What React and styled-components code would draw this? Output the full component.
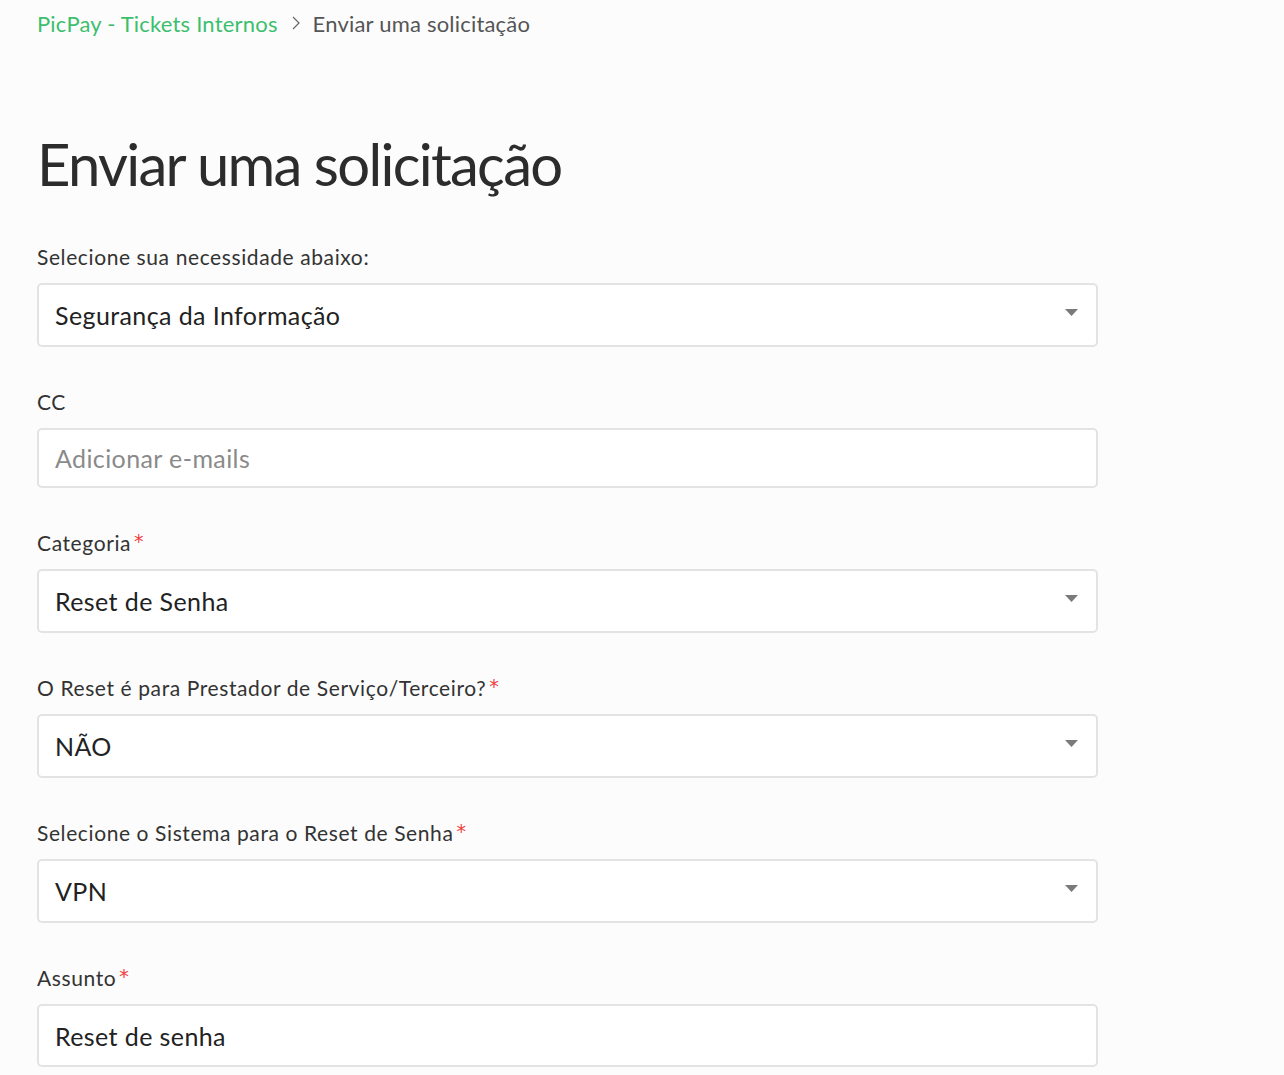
import React from "react";
import styled, { createGlobalStyle } from "styled-components";

const GlobalStyle = createGlobalStyle`
  html, body {
    margin: 0;
    padding: 0;
    background: #fcfcfc;
    font-family: Lato, "Liberation Sans", sans-serif;
    color: #2f2f2f;
  }
`;

const Page = styled.div`
  width: 1061px;
  padding: 7px 0 0 37px;
`;

const Breadcrumbs = styled.nav`
  display: flex;
  align-items: center;
  height: 32px;
  font-size: 22px;
  letter-spacing: 0.2px;
  > a {
    color: #3cbf6d;
    text-decoration: none;
  }
  > span {
    color: #555;
  }
  > svg {
    margin: 0 13px 0 14px;
  }
`;

const Title = styled.h1`
  margin: 90px 0 43px;
  font-size: 58px;
  font-weight: 400;
  letter-spacing: -1.7px;
  line-height: 70px;
  color: #2c2c2c;
`;

const Field = styled.div`
  margin-bottom: 40px;
`;

const Label = styled.label`
  display: block;
  height: 30px;
  line-height: 30px;
  margin-bottom: 11px;
  font-size: 21px;
  letter-spacing: 0.6px;
  color: #333;
`;

const Required = styled.span`
  color: #f0403c;
  margin-left: 3px;
  font-family: "DejaVu Sans", sans-serif;
  font-size: 19px;
  position: relative;
  top: -3px;
`;

const Box = styled.div`
  display: flex;
  align-items: center;
  justify-content: space-between;
  box-sizing: border-box;
  height: ${(p) => p.$h || 64}px;
  padding: 0 18px 0 16px;
  background: #fff;
  border: 2px solid #e3e3e3;
  border-radius: 5px;
  font-size: 25px;
  letter-spacing: 0.4px;
  color: ${(p) => (p.$placeholder ? "#8a8a8a" : "#222")};
  > svg {
    margin-bottom: 6px;
  }
`;

const Caret = () => (
  <svg width="13" height="7" viewBox="0 0 13 7">
    <polygon points="0,0 13,0 6.5,7" fill="#7a7a7a" />
  </svg>
);

const fields = [
  { label: "Selecione sua necessidade abaixo:", value: "Segurança da Informação", select: true },
  { label: "CC", value: "Adicionar e-mails", placeholder: true, h: 60 },
  { label: "Categoria", value: "Reset de Senha", select: true, required: true },
  { label: "O Reset é para Prestador de Serviço/Terceiro?", value: "NÃO", select: true, required: true },
  { label: "Selecione o Sistema para o Reset de Senha", value: "VPN", select: true, required: true },
  { label: "Assunto", value: "Reset de senha", required: true, h: 63 },
];

const App = () => {
  return (
    <>
      <GlobalStyle />
      <Page>
        <Breadcrumbs>
          <a href="#">PicPay - Tickets Internos</a>
          <svg width="8" height="14" viewBox="0 0 8 14">
            <polyline points="1,1 7,7 1,13" fill="none" stroke="#666" strokeWidth="1.2" />
          </svg>
          <span>Enviar uma solicitação</span>
        </Breadcrumbs>
        <Title>Enviar uma solicitação</Title>
        {fields.map((f) => (
          <Field key={f.label}>
            <Label>
              {f.label}
              {f.required && <Required>*</Required>}
            </Label>
            <Box $h={f.h} $placeholder={f.placeholder}>
              <span>{f.value}</span>
              {f.select && <Caret />}
            </Box>
          </Field>
        ))}
      </Page>
    </>
  );
};

export default App;
